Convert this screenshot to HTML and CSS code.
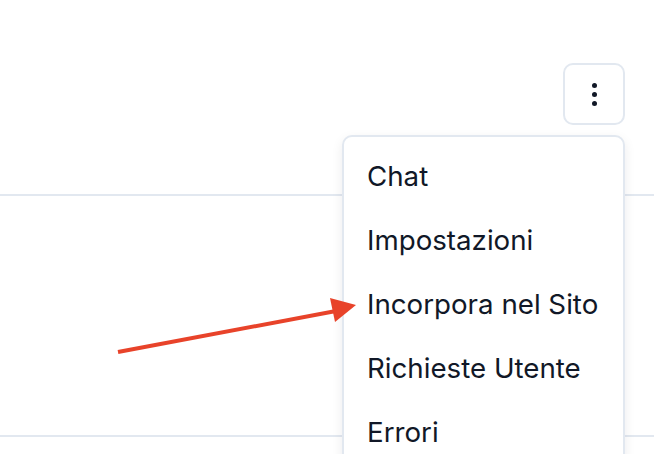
FILE: index.html
```html
<!DOCTYPE html>
<html lang="it">
<head>
  <meta charset="UTF-8">
  <meta name="viewport" content="width=device-width, initial-scale=1">
  <title>Menu</title>
  <link rel="stylesheet" href="styles.css">
</head>
<body>
  <div class="page">
    <div class="top-bar">
      <button class="more-btn" aria-label="Altro">
        <span class="dot"></span>
        <span class="dot"></span>
        <span class="dot"></span>
      </button>
    </div>
    <div class="row"></div>

    <div class="dropdown">
      <div class="dropdown-item">Chat</div>
      <div class="dropdown-item">Impostazioni</div>
      <div class="dropdown-item">Incorpora nel Sito</div>
      <div class="dropdown-item">Richieste Utente</div>
      <div class="dropdown-item">Errori</div>
    </div>

    <svg class="arrow" width="654" height="454" viewBox="0 0 654 454">
      <line x1="118" y1="352" x2="336" y2="311" stroke="#e8432a" stroke-width="4"/>
      <polygon points="356,305 330,298 335,322" fill="#e8432a"/>
    </svg>
  </div>
</body>
</html>
```

FILE: styles.css
```css
body {
  margin: 0;
  background: #ffffff;
  font-family: Inter, "Noto Sans", sans-serif;
  color: #111827;
}

.page {
  position: relative;
  width: 654px;
  height: 454px;
  overflow: hidden;
}

.top-bar {
  height: 196px;
  display: flex;
  justify-content: flex-end;
  align-items: flex-start;
  padding: 63px 29px 0 0;
  box-sizing: border-box;
  border-bottom: 2px solid #e2e8f0;
}

.more-btn {
  width: 62px;
  height: 62px;
  border: 2px solid #e2e8f0;
  border-radius: 10px;
  background: #ffffff;
  display: flex;
  flex-direction: column;
  align-items: center;
  justify-content: center;
  gap: 4px;
  padding: 0;
}

.dot {
  width: 5px;
  height: 5px;
  border-radius: 50%;
  background: #111827;
}

.row {
  height: 239px;
  border-bottom: 2px solid #e2e8f0;
}

.dropdown {
  position: absolute;
  top: 135px;
  left: 342px;
  width: 283px;
  height: 340px;
  box-sizing: border-box;
  padding-top: 7px;
  background: #ffffff;
  border: 2px solid #e2e8f0;
  border-radius: 10px;
  box-shadow: 0 4px 12px rgba(15, 23, 42, 0.08);
}

.dropdown-item {
  height: 64px;
  display: flex;
  align-items: center;
  padding-left: 23px;
  font-size: 27.7px;
}

.arrow {
  position: absolute;
  top: 0;
  left: 0;
}
```
